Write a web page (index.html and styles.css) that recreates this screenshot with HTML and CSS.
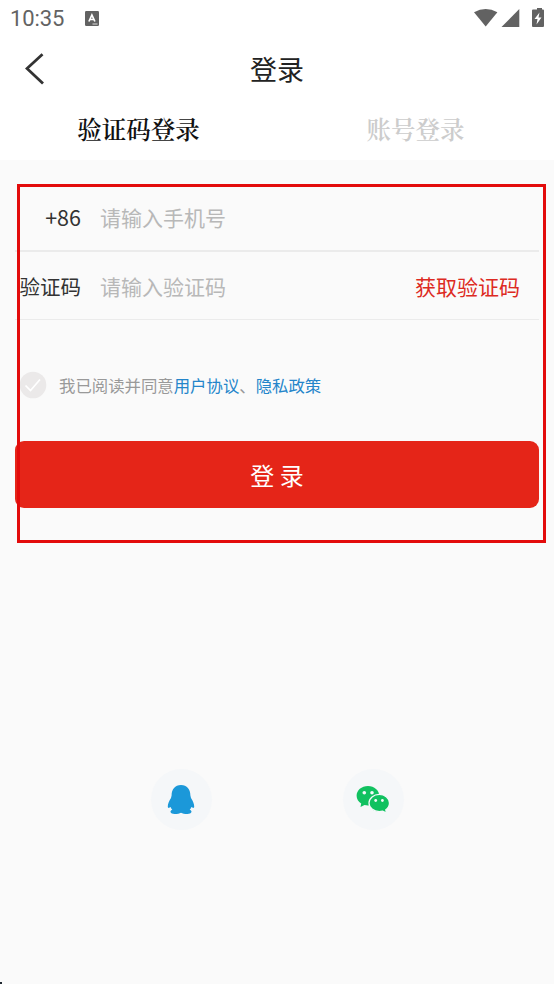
FILE: index.html
```html
<!DOCTYPE html>
<html lang="zh-CN">
<head>
<meta charset="utf-8">
<title>登录</title>
<link rel="stylesheet" href="styles.css">
</head>
<body>
<div class="screen">
  <header class="top">
    <div class="status">
      <span class="time">10:35</span>
      <svg class="lang" width="14" height="15" viewBox="0 0 14 15"><rect width="14" height="15" rx="1.2" fill="#626262"/><path d="M3.9 10.5 6.9 4l3 6.500M5 8.500h3.800" fill="none" stroke="#fff" stroke-width="1.700"/><path d="M7.500 13h5" stroke="#ddd" stroke-width="1"/></svg>
      <svg class="signals" width="70" height="20" viewBox="0 0 70 20"><g fill="#626262"><path d="M0 4.300Q11.700-2.300 23.400 4.300L11.700 18.500z"/><path d="M45.300 1v18H27.500z"/><path d="M61 1.500h2V0h5v1.500h1q1 0 1 1V18q0 1-1 1H59q-1 0-1-1V2.500q0-1 1-1z"/></g><path d="M65.500 4.500 60.500 11h3l-1 5.500 5-7h-3z" fill="#fff"/></svg>
    </div>
    <div class="nav">
      <svg class="back" width="20" height="32" viewBox="0 0 20 32"><path d="M17.500 1.300 2 15.500 18 30.500" fill="none" stroke="#333" stroke-width="2.800"/></svg>
      <h1 class="title">登录</h1>
    </div>
    <div class="tabs">
      <div class="tab active">验证码登录</div>
      <div class="tab">账号登录</div>
    </div>
  </header>
  <main class="form">
    <div class="row"><span class="label code">+86</span><span class="hint">请输入手机号</span></div>
    <div class="row second"><span class="label">验证码</span><span class="hint">请输入验证码</span><span class="get">获取验证码</span></div>
    <div class="agree">
      <svg width="28" height="28" viewBox="0 0 28 28"><circle cx="14" cy="14" r="13.300" fill="#ebe9e9"/><path d="m6.500 14.500 5 5 9.500-11" fill="none" stroke="#fff" stroke-width="1.700"/></svg>
      <span class="terms">我已阅读并同意<span class="link">用户协议</span>、<span class="link">隐私政策</span></span>
    </div>
    <div class="submit">登 录</div>
  </main>
  <footer class="social">
    <div class="round"><svg width="28" height="32" viewBox="0 0 28 32"><path d="M14 1C8 1 4.600 5.500 4.600 11.500L4 14C2 17 .8 20 .8 22.500c0 2 1.400 1.600 2.800.6.300 1 .9 2 1.700 2.700C2 27 3.500 30 7.500 30c3 0 5-.4 6.500-1.200 1.500.8 3.500 1.200 6.500 1.200 4 0 5.500-3 2.200-4.200.8-.7 1.400-1.700 1.700-2.700 1.400 1 2.800 1.400 2.800-.6 0-2.500-1.200-5.500-3.200-8.500l-.6-2.500C23.400 5.500 20 1 14 1z" fill="#1b98d9"/></svg></div>
    <div class="round"><svg width="34" height="30" viewBox="0 0 34 30"><g fill="#11c160"><path d="M12 1C5.500 1 .6 5.400.6 10.800c0 3.200 1.800 6 4.600 7.700L4.500 22l4-2c1.100.3 2.300.4 3.500.4 6.300 0 11.300-4.300 11.300-9.600S18.300 1 12 1z"/><path d="M23.300 9.400c-5.700 0-10.300 3.800-10.300 8.600s4.600 8.600 10.300 8.600c1.200 0 2.400-.2 3.400-.5l3.700 1.900-.6-3.300c2.300-1.500 3.700-3.900 3.700-6.700 0-4.800-4.500-8.600-10.200-8.600z" stroke="#f5f8fa" stroke-width="1.300"/></g><g fill="#f5f8fa"><circle cx="8.300" cy="7.800" r="1.800"/><circle cx="16" cy="7.800" r="1.800"/><circle cx="19.700" cy="15.500" r="1.400"/><circle cx="26.400" cy="15.500" r="1.400"/></g></svg></div>
  </footer>
  <div class="frame"></div>
  <div class="corner"></div>
</div>
</body>
</html>
```
FILE: styles.css
```css
* { box-sizing: border-box; }
body { margin: 0; font-family: "Noto Sans CJK SC", sans-serif; }
.screen { position: relative; width: 554px; height: 984px; overflow: hidden; background: #fafafa; display: flex; flex-direction: column; }
.top { height: 160px; flex: none; background: #fff; }
.status { height: 38px; display: flex; align-items: center; padding: 0 10px 2px 10px; }
.time { font: 22px/36px Roboto, sans-serif; color: #636363; width: 75px; padding-top: 2px; letter-spacing: -0.1px; }
.signals { margin-left: auto; }
.nav { height: 62px; display: grid; grid-template-columns: 45px 1fr 45px; align-items: center; }
.back { margin-left: 25px; }
.title { margin: 0; text-align: center; font-size: 27px; line-height: 40px; font-weight: 400; color: #222; }
.tabs { display: flex; height: 60px; }
.tab { width: 277px; text-align: center; font: 600 24.5px/58px "Noto Serif CJK SC", "Noto Sans CJK SC", serif; color: #ccc; }
.active { color: #111; }
.form { height: 368px; padding: 24px 15px 0; display: flex; flex-direction: column; }
.row { height: 68px; border-bottom: 2px solid #ebebeb; display: flex; align-items: center; font-size: 21px; line-height: 30px; padding-right: 19px; }
.second { border-bottom-width: 1px; }
.label { width: 66px; text-align: right; color: #333; flex: none; white-space: nowrap; font-size: 20.5px; }
.code { font-size: 21.5px; }
.hint { margin-left: 19px; color: #b8b8b8; }
.get { margin-left: auto; color: #dd2a22; }
.agree { height: 121px; padding: 8px 0 0 4px; display: flex; align-items: center; }
.terms { margin-left: 12px; font-size: 16.4px; line-height: 24px; color: #999; }
.link { color: #2485ca; }
.submit { height: 67px; width: 524px; border-radius: 9px; background: #e52518; color: #fff; text-align: center; font-size: 24px; line-height: 67px; }
.social { margin-top: 241px; height: 61px; display: flex; justify-content: center; gap: 131px; }
.round { width: 61px; height: 61px; border-radius: 50%; background: #f5f7f9; display: flex; align-items: center; justify-content: center; }
.frame { position: absolute; left: 17px; top: 184px; width: 529px; height: 359px; border: 3px solid #e30b0b; }
.corner { position: absolute; left: 0; bottom: 0; width: 2px; height: 2px; background: #202830; }
```
